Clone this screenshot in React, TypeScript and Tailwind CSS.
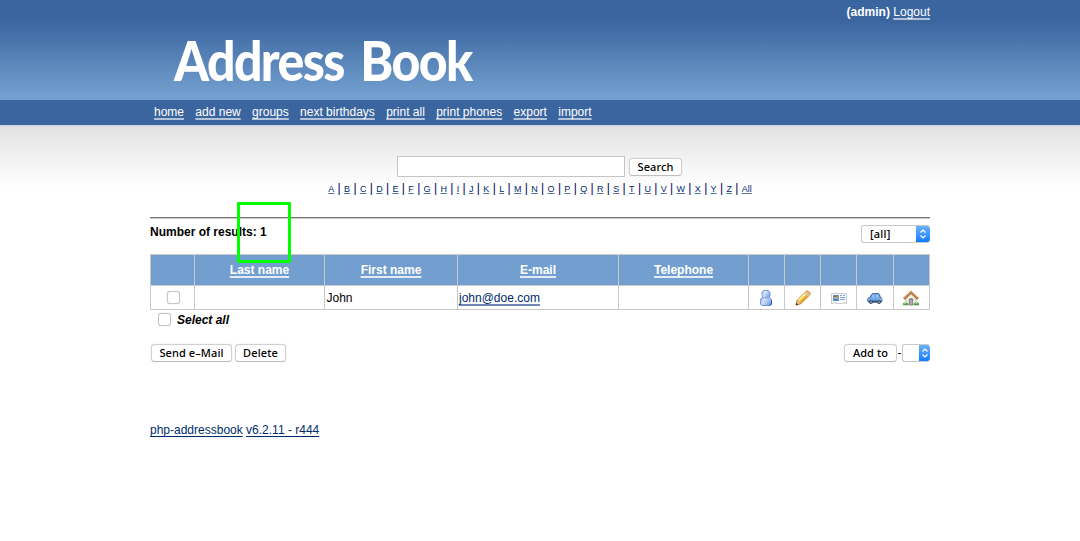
import React from "react";

const navItems = ["home", "add new", "groups", "next birthdays", "print all", "print phones", "export", "import"];
const letters = [..."ABCDEFGHIJKLMNOPQRSTUVWXYZ", "All"];
const headings = ["", "Last name", "First name", "E-mail", "Telephone", "", "", "", "", ""];

function PersonIcon() {
  return (
    <svg width="16" height="16" viewBox="0 0 16 16">
      <defs>
        <linearGradient id="person" x1="0" y1="0" x2="1" y2="0.6">
          <stop offset="0" stopColor="#8fb2ec" />
          <stop offset="0.45" stopColor="#cfdffa" />
          <stop offset="1" stopColor="#7ba2e6" />
        </linearGradient>
      </defs>
      <path d="M4.6 7.2C3 8.2 2.5 9.6 2.5 11.5v2.3c0 1.2 1 1.7 2.3 1.7h6.4c1.3 0 2.3-.5 2.3-1.7v-2.3c0-1.9-.5-3.3-2.1-4.3z" fill="url(#person)" stroke="#6a90d6" />
      <path d="M5.8.5h4.4l1.8 1.6v3.6L10.6 8H5.4L4 5.7V2.1z" fill="url(#person)" stroke="#7c9fdf" />
      <path d="M13.5 10.8v2.9l-1.5 1.7" fill="none" stroke="#23479b" />
      <path d="M5 10.5c.4-1 1-1.5 1.8-1.7M6.2 2.2h2" fill="none" stroke="#f2f7ff" />
    </svg>
  );
}

function PencilIcon() {
  return (
    <svg width="16" height="16" viewBox="0 0 16 16">
      <path d="M1 15l1.2-4.8L10.8 1.7c1-.9 2-.9 2.9-.1l.8.8c.8.9.8 1.8 0 2.7L5.9 13.6z" fill="#f7c644" stroke="#bd7720" />
      <path d="M3.5 10.3l7.6-7.5" stroke="#fff3a6" strokeWidth="1.7" />
      <path d="M5.4 12.4l7.7-7.6" stroke="#e79a25" strokeWidth="1.1" />
      <path d="M10.2 2.7l3.2 3.2" stroke="#c9c6c2" strokeWidth="1.5" />
      <path d="M11.5 2c.8-.6 1.3-.5 1.9 0l.8.9c.5.6.5 1.2 0 1.8z" fill="#f0b48d" />
      <path d="M1.2 14.8l1.2-4 3 2.8z" fill="#f7dfb0" stroke="#b87329" strokeWidth=".5" />
      <path d="M.8 15.2l.7-2.4 1.8 1.6z" fill="#343434" />
    </svg>
  );
}

function CardIcon() {
  return (
    <svg width="16" height="16" viewBox="0 0 16 16">
      <path d="M.5 3.5h15v10h-2v-1h-2v1h-7v-1h-2v1h-2z" fill="#fbfbfc" stroke="#c9ccd0" />
      <path d="M2 5h6v6H2z" fill="#68a5e0" />
      <path d="M2.4 11c.2-1.6 1-2.3 2.6-2.3s2.4.7 2.6 2.3z" fill="#4a86c6" />
      <path d="M3.6 6h2.9v2.8H3.6z" fill="#e4a567" />
      <path d="M3.3 7V5.4h3.4v1.2H4.2V7z" fill="#7a5433" />
      <path d="M9 5.5h2M12 5.5h2M9 7.5h5M9 9.5h5" stroke="#79a3dc" />
    </svg>
  );
}

function CarIcon() {
  return (
    <svg width="16" height="16" viewBox="0 0 16 16">
      <path d="M1 8.2l2-.9 1.8-3.2c.3-.4.6-.6 1-.6h5.4c.5 0 .9.2 1.1.7l1.3 3.3 1.4 1v2.7l-1 1H1.8L.5 11V9z" fill="#5d95dc" stroke="#3566a4" strokeWidth=".9" />
      <path d="M4.2 7.5l1.5-2.9h2v2.9zM8.7 4.6h2.4l1.1 2.9H8.7z" fill="#9cc2ef" />
      <path d="M2 8.8h12" stroke="#94bdf0" />
      <path d="M1.5 11.5H14.5" stroke="#294a78" strokeWidth="1.2" />
      <circle cx="4" cy="12.1" r="1.9" fill="#3b4250" />
      <circle cx="12" cy="12.1" r="1.9" fill="#3b4250" />
      <circle cx="4" cy="12.1" r=".8" fill="#c8d1dc" />
      <circle cx="12" cy="12.1" r=".8" fill="#c8d1dc" />
      <path d="M.6 9.6h1.1M14.2 9.6h1.1" stroke="#f6e7ad" />
    </svg>
  );
}

function HouseIcon() {
  return (
    <svg width="16" height="16" viewBox="0 0 16 16">
      <path d="M3 7.5L8 3l5 4.5v7.2H3z" fill="#f6f1e8" stroke="#bfa584" strokeWidth=".8" />
      <path d="M1 8.9L8 2.4l7 6.5" fill="none" stroke="#8b5a2e" strokeWidth="2.5" />
      <path d="M1 8.5l7-6.5 7 6.5" fill="none" stroke="#d79a58" strokeWidth="1.5" />
      <path d="M6.3 8.8h3.4V15H6.3z" fill="#858588" stroke="#77797d" strokeWidth=".8" />
      <path d="M7 10h2v4.5H7z" fill="#adaeb1" />
      <path d="M0 15.2v-1.7l1.2-1.1 1.5.5 1.2-.4 1.3 1.2v1.5zM10.8 15.2v-1.5l1.3-1.3 1.3.5 1.5-.6 1.1 1.3v1.6z" fill="#4ba23f" />
      <path d="M1 13.5h2M12.5 13.5h2" stroke="#8dcf69" />
    </svg>
  );
}

const actions = [
  { Icon: PersonIcon, inset: "pr-[2px]" },
  { Icon: PencilIcon, inset: "" },
  { Icon: CardIcon, inset: "" },
  { Icon: CarIcon, inset: "pr-[1px]" },
  { Icon: HouseIcon, inset: "pr-[2px]" },
];

function MacButton({ children, className }: { children: React.ReactNode; className: string }) {
  return (
    <button className={`h-[18px] shrink-0 rounded-[4px] border border-[#d0d0d0] border-b-[#bdbdbd] bg-white text-center font-['Noto_Sans','Open_Sans',sans-serif] text-[11px] leading-[16px] font-medium tracking-[0.1px] whitespace-nowrap text-black shadow-[0_0_1px_#ccc] ${className}`}>
      {children}
    </button>
  );
}

function Stepper({ className }: { className: string }) {
  return (
    <span className={`flex h-full items-center justify-center rounded-r-[3px] bg-linear-to-b from-[#6bb0fa] to-[#087aff] ${className}`}>
      <svg width="8" height="12" viewBox="0 0 8 12" fill="none" stroke="white" strokeWidth="1.2">
        <path d="M1.5 4.5L4 2l2.5 2.5M1.5 7.5L4 10l2.5-2.5" />
      </svg>
    </span>
  );
}

function CheckBox({ label }: { label: string }) {
  return <input type="checkbox" aria-label={label} className="block size-[13px] shrink-0 appearance-none rounded-[3px] border-[1.5px] border-[#c6c6c6] bg-white shadow-[0_0_1px_#bbb]" />;
}

export default function App() {
  return (
    <div className="h-[541px] overflow-hidden bg-white font-['Liberation_Sans',Arial,sans-serif] text-[12px] leading-[14px] text-black">
      <header className="h-[100px] bg-linear-to-b from-[#3b659e] from-20% to-[#729fcf] to-95% text-white">
        <div className="mx-auto flex h-full w-[780px] flex-col">
          <div className="h-[31px] pt-[5px] text-right">
            <b>(admin)</b>{" "}
            <a href="#" className="underline decoration-white/60 decoration-[1.5px] underline-offset-[2px]">Logout</a>
          </div>
          <h1 className="-mt-px ml-[24px] w-[340px] origin-left scale-x-[0.893] font-['Lato',sans-serif] text-[56px] leading-[60px] font-black tracking-[-1.8px] whitespace-nowrap [word-spacing:7px]">
            Address Book
          </h1>
        </div>
      </header>

      <nav className="h-[25px] bg-[#3b659f] text-white">
        <div className="mx-auto flex w-[780px] gap-[11.33px] pt-[5px] pl-[4px]">
          {navItems.map((item) => (
            <a key={item} href="#" className="whitespace-nowrap underline decoration-white/60 decoration-[1.5px] underline-offset-[2px] [text-decoration-skip-ink:none]">{item}</a>
          ))}
        </div>
      </nav>

      <main className="h-[416px] border-t-2 border-[#d4d8e2] bg-linear-to-b from-[#e3e3e3] from-0% to-white to-[60px]">
        <div className="mx-auto w-[780px]">
          <div className="flex h-[50px] items-end pl-[247px]">
            <input aria-label="Search text" className="h-[21px] w-[228px] border border-[#c5c5c5] bg-white" />
            <MacButton className="mb-[1px] ml-[4px] w-[53px]">Search</MacButton>
          </div>
          <div className="flex h-[40px] items-start justify-center pt-[4px] whitespace-pre text-[#000060]">
            {letters.map((letter, i) => (
              <React.Fragment key={letter}>
                {i > 0 && <span className="leading-[14px]"> | </span>}
                <a href="#" className="text-[9px] leading-[16px] text-[#002b6b] underline decoration-[#5570a0] underline-offset-[1px]">{letter}</a>
              </React.Fragment>
            ))}
          </div>

          <div className="relative h-[37px] border-t border-[#777]">
            <div className="h-px bg-[#c9c9c9]" />
            <div className="flex items-start justify-between pt-[6px]">
              <b>Number of results: 1</b>
              <button aria-label="Group filter" className="flex h-[18px] w-[69px] items-center rounded-[3px] border border-r-0 border-[#c9c9c9] bg-white font-['Noto_Sans',sans-serif] text-[11px] font-medium tracking-[0.2px]">
                <span className="flex-1 pl-[8px] text-left">[all]</span>
                <Stepper className="w-[14px]" />
              </button>
            </div>
            <div className="pointer-events-none absolute top-[-16px] left-[87px] h-[61px] w-[54px] rounded-[1px] border-[3px] border-[#00ff00]" />
          </div>

          <div className="border-y border-r border-[#c9c9c9]">
            <div className="grid h-[30px] grid-cols-[44px_130px_133px_161px_130px_36px_36px_36px_37px_36px] bg-[#729fcf]">
              {headings.map((heading, i) => (
                <div key={i} className="flex items-center justify-center border-l border-[#c9c9c9] font-bold text-white">
                  {heading && <a href="#" className="underline decoration-white/80 decoration-[1.5px] underline-offset-[2px] [text-decoration-skip-ink:none]">{heading}</a>}
                </div>
              ))}
            </div>
            <div className="grid h-[24px] grid-cols-[44px_130px_133px_161px_130px_36px_36px_36px_37px_36px] border-t border-[#c9c9c9] bg-white">
              <div className="flex items-center justify-center border-l border-[#c9c9c9] pl-[2px]"><CheckBox label="Select John" /></div>
              <div className="border-l border-[#c9c9c9]" />
              <div className="flex items-center border-l border-[#c9c9c9] pl-[1.5px]">John</div>
              <div className="flex items-center border-l border-[#c9c9c9] pl-[1px]">
                <a href="#" className="text-[#002b6b] underline decoration-[#6f86b5] decoration-[1.5px] underline-offset-[2px] [text-decoration-skip-ink:none]">john@doe.com</a>
              </div>
              <div className="border-l border-[#c9c9c9]" />
              {actions.map(({ Icon, inset }, i) => (
                <div key={i} className={`flex items-center justify-center border-l border-[#c9c9c9] ${inset}`}><Icon /></div>
              ))}
            </div>
          </div>

          <div className="flex h-[33px] items-start gap-[6px] pt-[3px] pl-[8px]">
            <CheckBox label="Select all" />
            <b className="italic">Select all</b>
          </div>

          <div className="flex h-[78px] items-start justify-between pt-[1px]">
            <div className="flex gap-[3px] pl-[1px]">
              <MacButton className="w-[81px]">Send e–Mail</MacButton>
              <MacButton className="w-[51px]">Delete</MacButton>
            </div>
            <div className="flex items-center">
              <MacButton className="w-[53px]">Add to</MacButton>
              <span className="w-[5px] text-center">-</span>
              <button aria-label="Target group" className="flex h-[18px] w-[28px] justify-end rounded-[3px] border border-r-0 border-[#c9c9c9] bg-white">
                <Stepper className="w-[11px]" />
              </button>
            </div>
          </div>

          <footer className="pt-[2px] text-[#002b6b]">
            <a href="#" className="underline decoration-1 underline-offset-[2px] [text-decoration-skip-ink:none]">php-addressbook</a>{" "}
            <a href="#" className="underline decoration-1 underline-offset-[2px]">v6.2.11 - r444</a>
          </footer>
        </div>
      </main>
    </div>
  );
}
